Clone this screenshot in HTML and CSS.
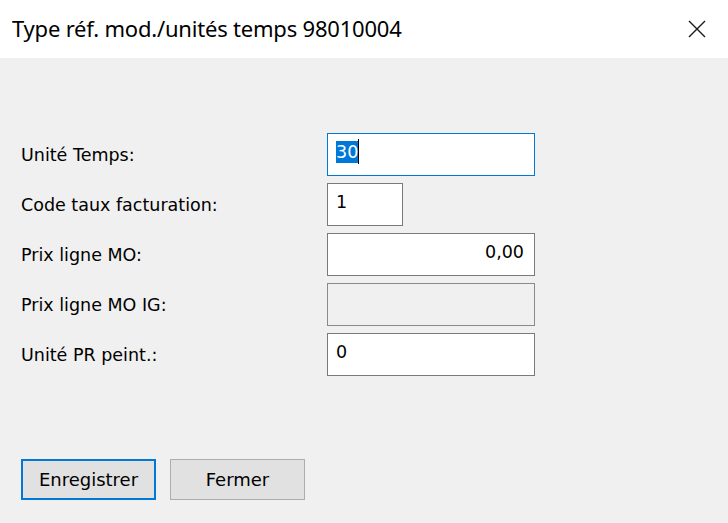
FILE: index.html
```html
<!DOCTYPE html>
<html lang="fr">
<head>
<meta charset="utf-8">
<title>Type réf. mod./unités temps</title>
<link rel="stylesheet" href="styles.css">
</head>
<body>
<div class="dialog">
  <header class="titlebar">
    <span class="title">Type réf. mod./unités temps 98010004</span>
    <svg class="close" width="18" height="18" viewBox="0 0 18 18"><path d="M1 1L17 17M17 1L1 17" stroke="#1a1a1a" stroke-width="1.4" fill="none"/></svg>
  </header>
  <main class="body">
    <div class="form">
      <label class="lbl">Unité Temps:</label>
      <div class="field focus"><span class="sel">30</span><span class="caret"></span></div>
      <label class="lbl">Code taux facturation:</label>
      <div class="field short">1</div>
      <label class="lbl">Prix ligne MO:</label>
      <div class="field right">0,00</div>
      <label class="lbl">Prix ligne MO IG:</label>
      <div class="field disabled"></div>
      <label class="lbl">Unité PR peint.:</label>
      <div class="field">0</div>
    </div>
    <div class="buttons">
      <button class="btn default">Enregistrer</button>
      <button class="btn">Fermer</button>
    </div>
  </main>
</div>
</body>
</html>
```
FILE: styles.css
```css
html, body { margin: 0; padding: 0; }
body { width: 728px; height: 523px; overflow: hidden; background: #f0f0f0; }
.dialog { display: flex; flex-direction: column; height: 523px; }
.titlebar {
  height: 58px; background: #fff; display: flex; align-items: center;
  justify-content: space-between; padding: 0 22px 0 12px; box-sizing: border-box;
}
.title { font-family: "Noto Sans", sans-serif; font-size: 22px; color: #000; margin-top: -2px; letter-spacing: -0.2px; }
.close { display: block; margin-top: -1px; }
.body { flex: 1; padding: 75px 0 0 21px; display: flex; flex-direction: column; }
.form {
  display: grid; grid-template-columns: 306px 208px; grid-auto-rows: 43px; row-gap: 7px;
  align-items: center;
}
.lbl { font-family: "DejaVu Sans", Tahoma, sans-serif; font-size: 17.5px; color: #000; }
.field {
  height: 43px; box-sizing: border-box; background: #fff; border: 1.5px solid #7a7a7a;
  font-family: "DejaVu Sans", Tahoma, sans-serif; font-size: 17.5px; color: #000;
  display: flex; align-items: center; padding: 0 8px; padding-bottom: 6px;
}
.field.focus { border-color: #0078d7; }
.field.short { width: 76px; }
.field.right { justify-content: flex-end; padding-right: 10px; }
.field.disabled { background: #f0f0f0; border-color: #8a8a8a; }
.sel { background: #0078d7; color: #fff; padding: 1px 0; }
.caret { width: 1px; height: 25px; background: #000; }
.buttons { display: flex; gap: 14px; margin-top: 83px; }
.btn {
  width: 135px; height: 41px; box-sizing: border-box; background: #e1e1e1;
  border: 1.5px solid #adadad; font-family: "DejaVu Sans", Tahoma, sans-serif;
  font-size: 18px; color: #000; padding: 0; margin: 0;
}
.btn.default { border: 2px solid #0078d7; }
```
